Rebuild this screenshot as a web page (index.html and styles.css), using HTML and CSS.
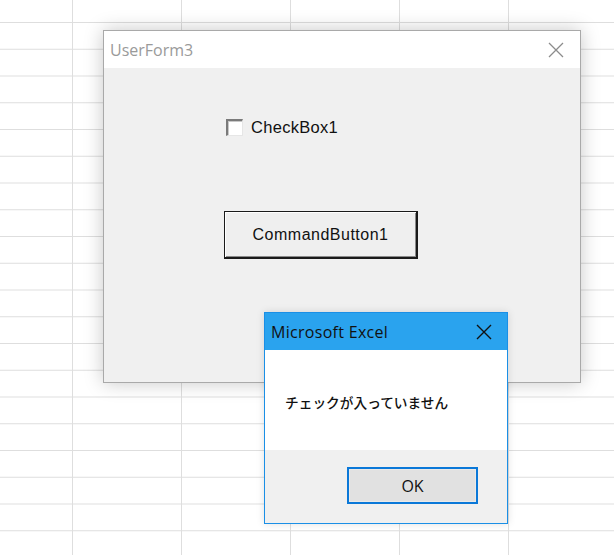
FILE: index.html
```html
<!DOCTYPE html>
<html lang="ja">
<head>
<meta charset="UTF-8">
<meta name="viewport" content="width=device-width, initial-scale=1.0">
<link rel="stylesheet" href="styles.css">
<title>UserForm3</title>
</head>
<body>

<main class="sheet">

<!-- the vba form -->
<section class="userform">
  <div class="ufTitle">
    <span class="ufCaption">UserForm3</span>
    <svg class="closeIcon" width="16" height="16" viewBox="0 0 16 16">
      <path d="M1 1 L15 15 M15 1 L1 15" stroke="#8c8c8c" stroke-width="1.3" fill="none"/>
    </svg>
  </div>
  <div class="ufBody">
    <label class="checkRow">
      <span class="checkBox"></span>
      <span class="checkText">CheckBox1</span>
    </label>
    <button class="cmdBtn">CommandButton1</button>
  </div>
</section>

<!-- msgbox on top -->
<section class="msgbox">
  <div class="msgTitle">
    <span class="msgCaption">Microsoft Excel</span>
    <svg class="closeIcon" width="16" height="16" viewBox="0 0 16 16">
      <path d="M1 1 L15 15 M15 1 L1 15" stroke="#111" stroke-width="1.4" fill="none"/>
    </svg>
  </div>
  <div class="msgBody">
    <p class="msgText">チェックが入っていません</p>
  </div>
  <div class="msgFoot">
    <button class="okBtn">OK</button>
  </div>
</section>

</main>

</body>
</html>
```

FILE: styles.css
```css
*:before,*,*:after{
margin:0;
padding:0;
box-sizing:border-box;
}

:root{
--grid_line:#dedede;
--face:#f0f0f0;
--accent:#2aa3ee;
--accent_border:#1a8fe6;
--ui_font:"Open Sans","Noto Sans","Noto Sans CJK JP",sans-serif;
--jp_font:"Noto Sans CJK JP",sans-serif;
}

body{
background:#fff;
font-family:var(--ui_font);
}

/* excel cells behind everything */
.sheet{
position:relative;
width:614px;
height:555px;
overflow:hidden;
background-color:#fff;
background-image:
linear-gradient(to right, var(--grid_line) 0 1px, transparent 1px),
linear-gradient(to bottom, var(--grid_line) 0 1px, transparent 1px);
background-size:109px 100%, 100% 26.75px;
background-position:72px 0, 0 22px;
}


/* userform window */
.userform{
position:absolute;
left:103px;
top:30px;
width:478px;
height:353px;
display:flex;
flex-direction:column;
background:var(--face);
border:1px solid #a9a9a9;
box-shadow:0 0 18px rgba(0,0,0,0.22);
}

.ufTitle{
height:37px;
display:flex;
align-items:center;
justify-content:space-between;
padding:0 16px 0 6px;
background:#fff;
}

.ufCaption{
color:#9a9a9a;
font-size:16px;
}

.ufBody{
flex:1;
display:flex;
flex-direction:column;
align-items:flex-start;
padding:50px 0 0 120px;
}

.checkRow{
display:flex;
align-items:center;
gap:8px;
margin-left:2px;
}

.checkBox{
width:17px;
height:17px;
background:#fff;
border-top:2px solid #7a7a7a;
border-left:2px solid #7a7a7a;
border-right:1px solid #e6e6e6;
border-bottom:1px solid #e6e6e6;
box-shadow:inset 1px 1px 0 #c8c8c8;
}

.checkText{
font-family:"Liberation Sans",sans-serif;
font-size:16.5px;
letter-spacing:0.3px;
color:#111;
}

.cmdBtn{
margin-top:74px;
width:194px;
height:48px;
background:#efefef;
color:#111;
font-family:"Liberation Sans",sans-serif;
font-size:16px;
letter-spacing:0.5px;
border:1px solid #1a1a1a;
border-bottom-width:2px;
border-right-width:2px;
box-shadow:inset 1px 1px 0 #fff, inset -1px -1px 0 #8a8a8a;
}


/* msgbox */
.msgbox{
position:absolute;
left:264px;
top:312px;
width:244px;
height:212px;
display:flex;
flex-direction:column;
border:1px solid var(--accent_border);
background:#fff;
box-shadow:0 0 8px rgba(0,0,0,0.12);
}

.msgTitle{
height:37px;
display:flex;
align-items:center;
justify-content:space-between;
padding:0 15px 0 6px;
background:var(--accent);
}

.msgCaption{
color:#111;
font-size:16px;
letter-spacing:0.3px;
}

.msgBody{
height:100px;
display:flex;
align-items:center;
padding:0 0 0 20px;
background:#fff;
}

.msgText{
font-family:var(--jp_font);
font-size:13.7px;
font-weight:500;
color:#111;
padding-top:4px;
}

.msgFoot{
flex:1;
display:flex;
justify-content:flex-end;
align-items:flex-start;
padding:17px 29px 0 0;
background:var(--face);
}

.okBtn{
width:131px;
height:37px;
background:#e1e1e1;
color:#111;
font-family:var(--ui_font);
font-size:16px;
border:2px solid #0a78d8;
box-shadow:inset 0 0 0 1px #e9e9e9;
}
```
